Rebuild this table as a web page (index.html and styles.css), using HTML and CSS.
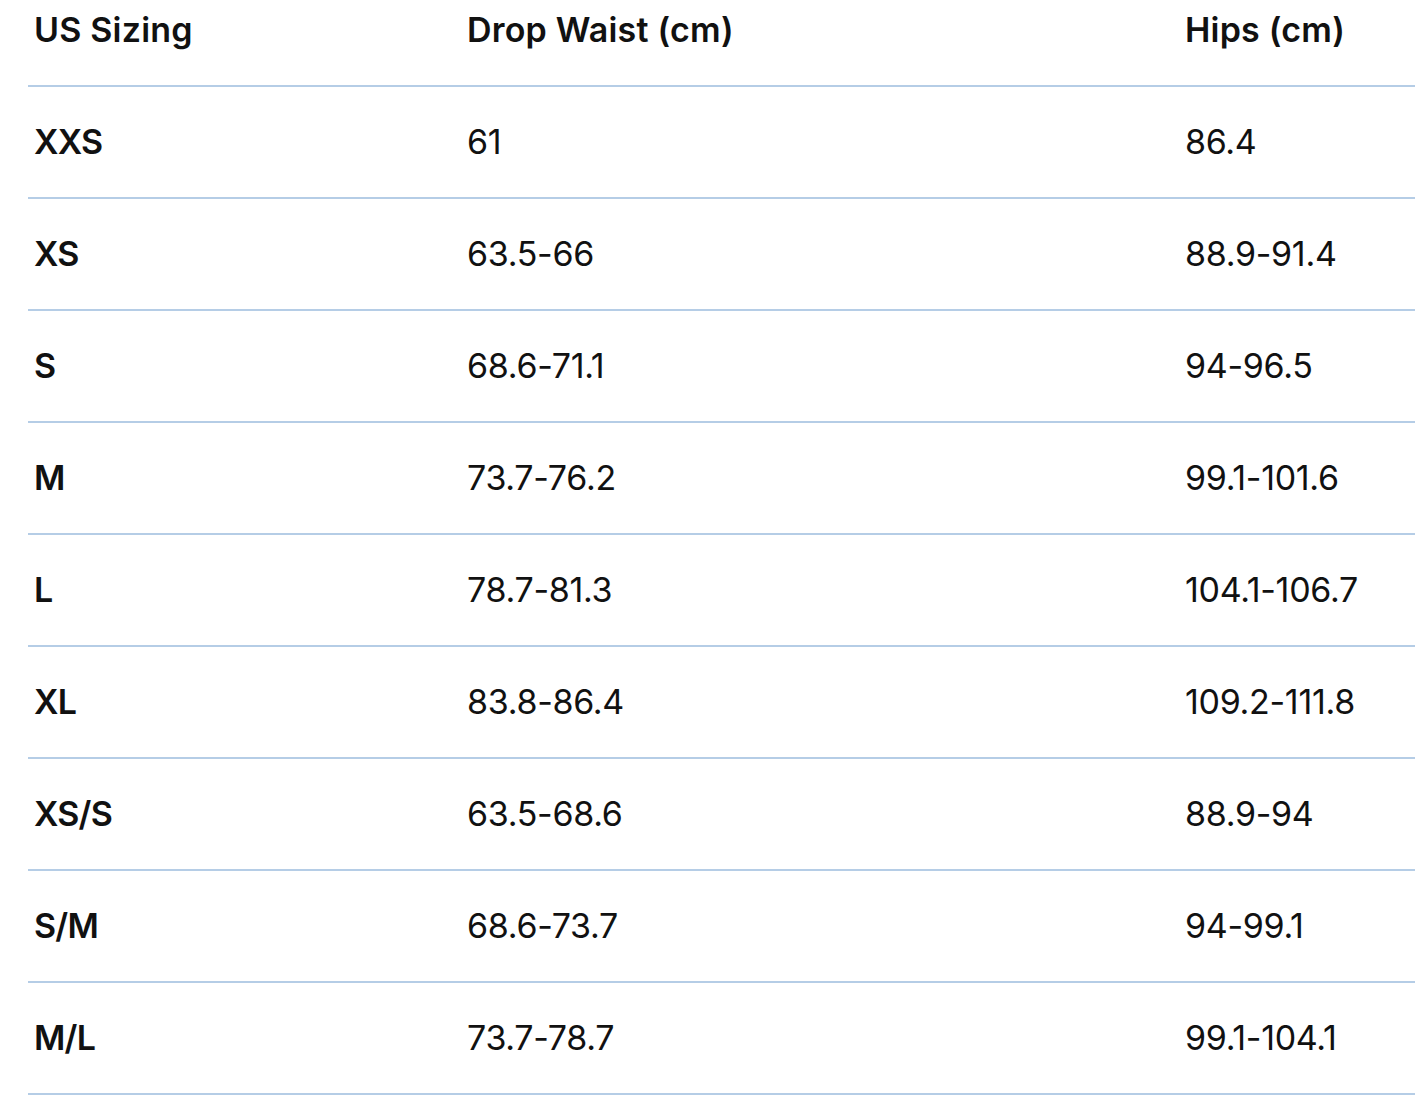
FILE: index.html
```html
<!DOCTYPE html>
<html lang="en">
<head>
<meta charset="utf-8">
<title>Size chart</title>
<link rel="stylesheet" href="styles.css">
</head>
<body>
<table class="size-table">
  <colgroup>
    <col class="col-size">
    <col class="col-waist">
    <col class="col-hips">
  </colgroup>
  <thead>
    <tr><th>US Sizing</th><th>Drop Waist (cm)</th><th>Hips (cm)</th></tr>
  </thead>
  <tbody>
    <tr><th>XXS</th><td>61</td><td>86.4</td></tr>
    <tr><th>XS</th><td>63.5-66</td><td>88.9-91.4</td></tr>
    <tr><th>S</th><td>68.6-71.1</td><td>94-96.5</td></tr>
    <tr><th>M</th><td>73.7-76.2</td><td>99.1-101.6</td></tr>
    <tr><th>L</th><td>78.7-81.3</td><td>104.1-106.7</td></tr>
    <tr><th>XL</th><td>83.8-86.4</td><td>109.2-111.8</td></tr>
    <tr><th>XS/S</th><td>63.5-68.6</td><td>88.9-94</td></tr>
    <tr><th>S/M</th><td>68.6-73.7</td><td>94-99.1</td></tr>
    <tr><th>M/L</th><td>73.7-78.7</td><td>99.1-104.1</td></tr>
  </tbody>
</table>
</body>
</html>
```
FILE: styles.css
```css
html, body {
  margin: 0;
  padding: 0;
  background: #ffffff;
}
body {
  font-family: Inter, "Open Sans", Roboto, "Liberation Sans", sans-serif;
  color: #111111;
  overflow: hidden;
}
.size-table {
  margin-left: 28px;
  width: 1387px;
  border-collapse: collapse;
  table-layout: fixed;
  font-size: 34px;
  line-height: 40px;
}
.col-size { width: 433px; }
.col-waist { width: 718px; }
.col-hips { width: 236px; }
.size-table th,
.size-table td {
  text-align: left;
  padding: 0 0 0 6px;
  white-space: nowrap;
  border-bottom: 2px solid #b5cde6;
}
.size-table thead th {
  font-weight: 600;
  letter-spacing: 0.2px;
  padding-top: 10px;
  padding-bottom: 35px;
}
.size-table tbody th {
  font-weight: 600;
  letter-spacing: -0.8px;
}
.size-table tbody td {
  font-weight: 400;
  letter-spacing: -0.3px;
}
.size-table tbody th,
.size-table tbody td {
  height: 112px;
  padding-top: 0;
  padding-bottom: 0;
  box-sizing: border-box;
  vertical-align: middle;
}
```
